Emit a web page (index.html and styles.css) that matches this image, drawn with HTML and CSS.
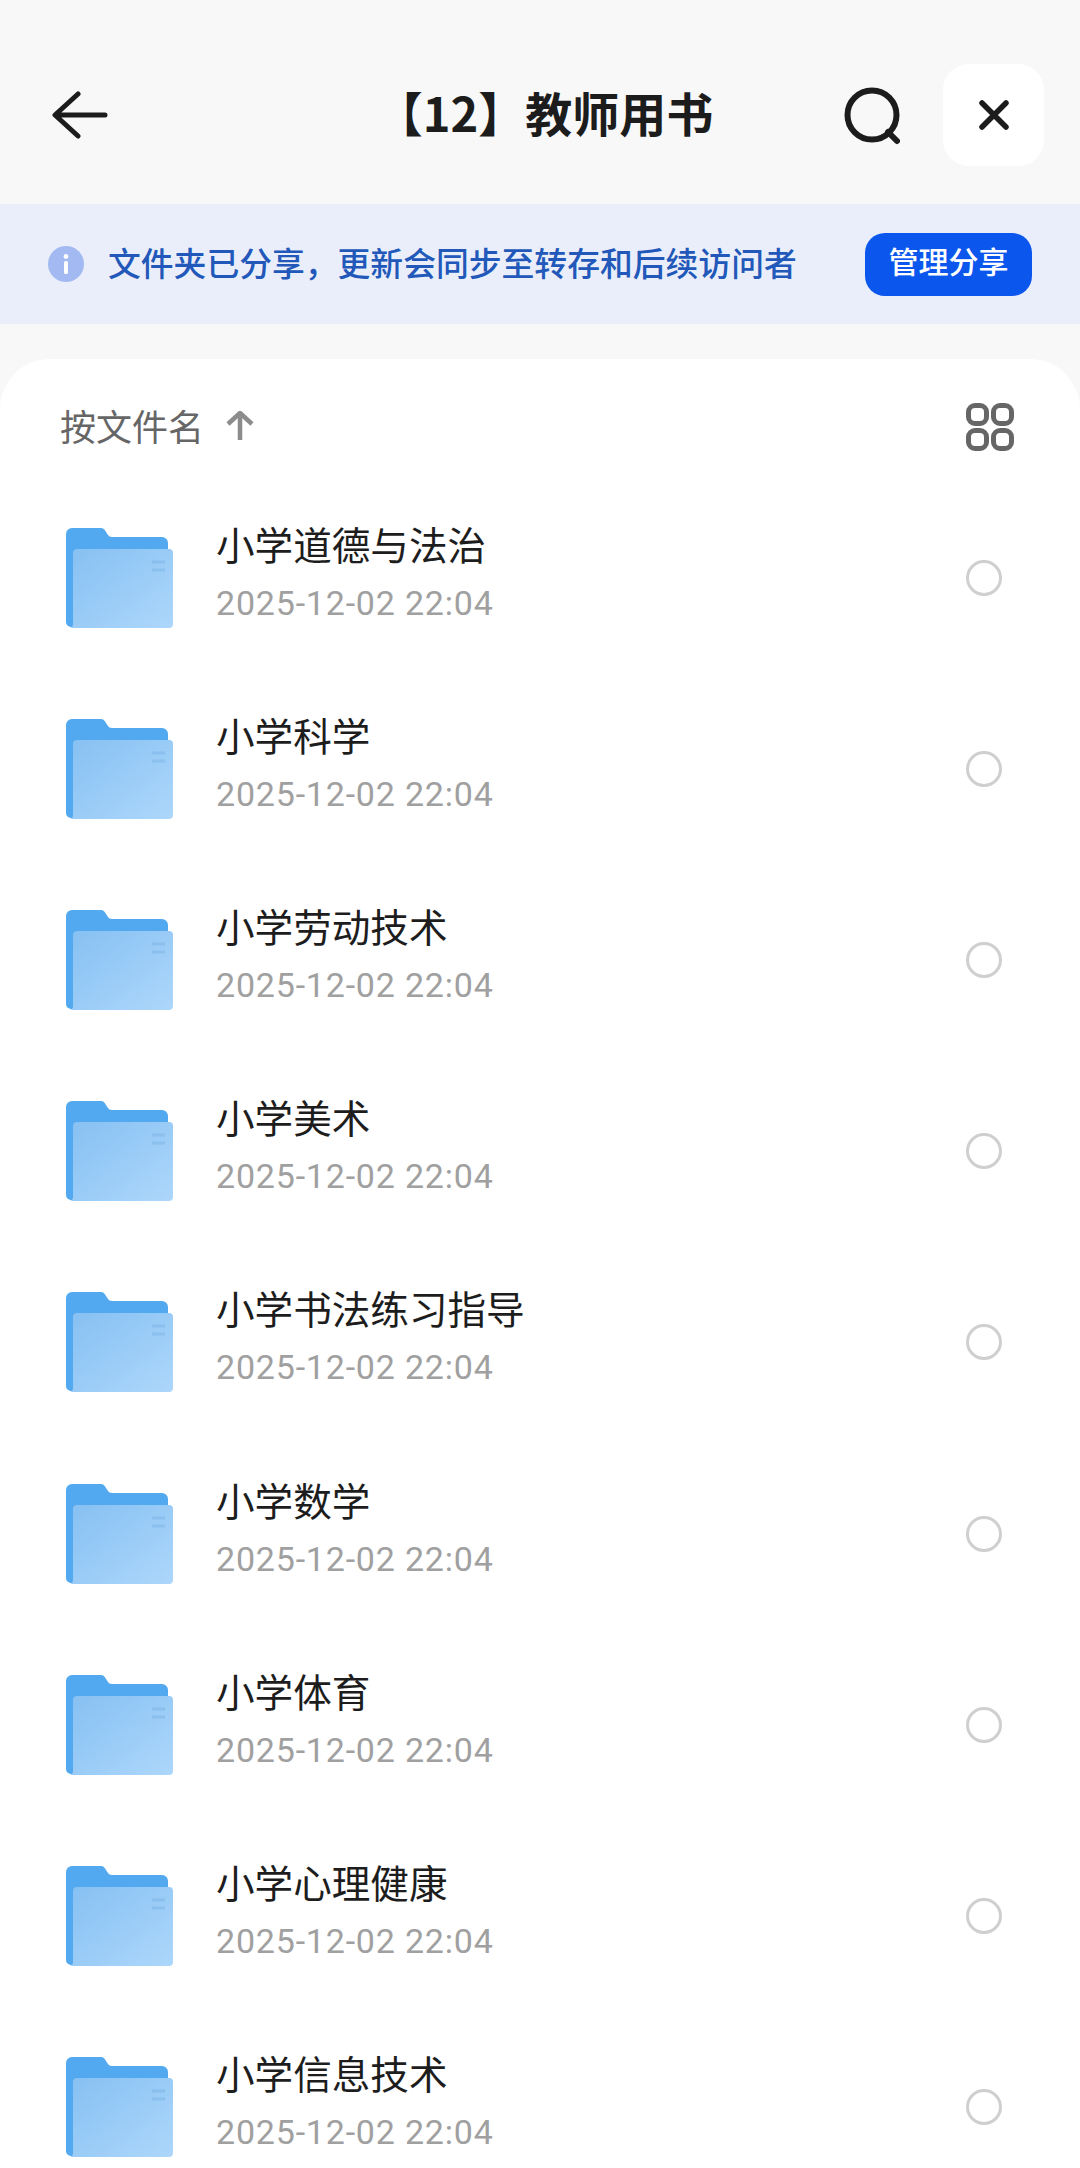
FILE: index.html
```html
<!DOCTYPE html>
<html lang="zh-CN">
	<head>
		<meta charset="utf-8">
		<title>【12】教师用书</title>
		<link rel="stylesheet" href="styles.css">
	</head>
	<body>
		<svg class="defs" width="0" height="0">
			<defs>
				<linearGradient id="folderFront" x1="0" y1="0" x2="1" y2="1">
					<stop offset="0" stop-color="#86c0f2"/>
					<stop offset="1" stop-color="#add7fb"/>
				</linearGradient>
				<symbol id="folder" viewBox="0 0 108 100">
					<path d="M0 6a6 6 0 0 1 6-6h29q3 0 5 4l2 3q1 2 4 2h50a6 6 0 0 1 6 6v10H8V99H5a5 5 0 0 1-5-5z" fill="#53a9f0"/>
					<path d="M7 25a4 4 0 0 1 4-4h92a4 4 0 0 1 4 4v71a4 4 0 0 1-4 4H4q3-1 3-4z" fill="url(#folderFront)"/>
					<path d="M86 34h13M86 42h13" stroke="#7fb6e6" stroke-width="3" opacity=".55"/>
				</symbol>
			</defs>
		</svg>

		<div class="topbar">
			<svg class="back" width="56" height="48" viewBox="0 0 56 48">
				<path d="M26 3 L3 24 L26 45 M4 24 H53" fill="none" stroke="#1c1c1c" stroke-width="5" stroke-linecap="round" stroke-linejoin="round"/>
			</svg>
			<div class="title">【12】教师用书</div>
			<svg class="search" width="56" height="58" viewBox="0 0 56 58">
				<circle cx="28" cy="28" r="24.5" fill="none" stroke="#1c1c1c" stroke-width="6"/>
				<path d="M44 45 L53 54" stroke="#1c1c1c" stroke-width="6" stroke-linecap="round"/>
			</svg>
			<div class="close">
				<svg width="32" height="32" viewBox="0 0 32 32">
					<path d="M4 4 L28 28 M28 4 L4 28" stroke="#1c1c1c" stroke-width="5.5" stroke-linecap="round"/>
				</svg>
			</div>
		</div>

		<div class="notice">
			<svg class="info" width="36" height="36" viewBox="0 0 36 36">
				<circle cx="18" cy="18" r="18" fill="#a3b9f2"/>
				<circle cx="18" cy="10.5" r="2.4" fill="#fff"/>
				<rect x="16" y="15" width="4" height="13" rx="1.5" fill="#fff"/>
			</svg>
			<div class="notice-text">文件夹已分享，更新会同步至转存和后续访问者</div>
			<div class="manage">管理分享</div>
		</div>

		<div class="panel">
			<div class="sortbar">
				<span class="sort-label">按文件名</span>
				<svg class="sort-arrow" width="30" height="30" viewBox="0 0 30 30">
					<path d="M3 13 L15 2 L27 13 M15 3 V29" fill="none" stroke="#8c8c8c" stroke-width="4.5" stroke-linejoin="round"/>
				</svg>
				<svg class="grid-icon" width="48" height="48" viewBox="0 0 48 48">
					<rect x="2.5" y="2.5" width="18" height="18" rx="6.5" fill="none" stroke="#666" stroke-width="5"/>
					<rect x="27.5" y="2.5" width="18" height="18" rx="6.5" fill="none" stroke="#666" stroke-width="5"/>
					<rect x="2.5" y="27.5" width="18" height="18" rx="6.5" fill="none" stroke="#666" stroke-width="5"/>
					<rect x="27.5" y="27.5" width="18" height="18" rx="6.5" fill="none" stroke="#666" stroke-width="5"/>
				</svg>
			</div>

			<div class="row">
				<svg class="folder"><use href="#folder"/></svg>
				<div class="info-col"><div class="name">小学道德与法治</div><div class="date">2025-12-02 22:04</div></div>
				<div class="radio"></div>
			</div>
			<div class="row">
				<svg class="folder"><use href="#folder"/></svg>
				<div class="info-col"><div class="name">小学科学</div><div class="date">2025-12-02 22:04</div></div>
				<div class="radio"></div>
			</div>
			<div class="row">
				<svg class="folder"><use href="#folder"/></svg>
				<div class="info-col"><div class="name">小学劳动技术</div><div class="date">2025-12-02 22:04</div></div>
				<div class="radio"></div>
			</div>
			<div class="row">
				<svg class="folder"><use href="#folder"/></svg>
				<div class="info-col"><div class="name">小学美术</div><div class="date">2025-12-02 22:04</div></div>
				<div class="radio"></div>
			</div>
			<div class="row">
				<svg class="folder"><use href="#folder"/></svg>
				<div class="info-col"><div class="name">小学书法练习指导</div><div class="date">2025-12-02 22:04</div></div>
				<div class="radio"></div>
			</div>
			<div class="row">
				<svg class="folder"><use href="#folder"/></svg>
				<div class="info-col"><div class="name">小学数学</div><div class="date">2025-12-02 22:04</div></div>
				<div class="radio"></div>
			</div>
			<div class="row">
				<svg class="folder"><use href="#folder"/></svg>
				<div class="info-col"><div class="name">小学体育</div><div class="date">2025-12-02 22:04</div></div>
				<div class="radio"></div>
			</div>
			<div class="row">
				<svg class="folder"><use href="#folder"/></svg>
				<div class="info-col"><div class="name">小学心理健康</div><div class="date">2025-12-02 22:04</div></div>
				<div class="radio"></div>
			</div>
			<div class="row">
				<svg class="folder"><use href="#folder"/></svg>
				<div class="info-col"><div class="name">小学信息技术</div><div class="date">2025-12-02 22:04</div></div>
				<div class="radio"></div>
			</div>
		</div>
	</body>
</html>
```

FILE: styles.css
```css
html, body {
	margin: 0;
	padding: 0;
}

body {
	width: 1080px;
	height: 2168px;
	overflow: hidden;
	background: #f8f8f8;
	font-family: "Noto Sans CJK SC", "Noto Sans", sans-serif;
}

.defs {
	display: block;
	height: 0;
}

/* top bar */
.topbar {
	height: 204px;
	display: flex;
	align-items: center;
	padding: 26px 36px 0 52px;
	box-sizing: border-box;
}

.back {
	flex: none;
}

.title {
	flex: 1;
	text-align: center;
	font-size: 47px;
	font-weight: 700;
	color: #1c1c1c;
	padding-left: 137px;
	margin-bottom: 8px;
	white-space: nowrap;
}

.search {
	flex: none;
	margin-right: 43px;
	margin-top: 1px;
}

.close {
	flex: none;
	width: 101px;
	height: 102px;
	background: #fff;
	border-radius: 26px;
	display: flex;
	align-items: center;
	justify-content: center;
}

/* share notice */
.notice {
	height: 120px;
	background: #eaeefa;
	display: flex;
	align-items: center;
	padding: 0 48px 0 48px;
	box-sizing: border-box;
}

.info {
	flex: none;
	margin-right: 24px;
}

.notice-text {
	flex: 1;
	font-size: 32.8px;
	font-weight: 500;
	color: #2158b9;
	white-space: nowrap;
	margin-bottom: 5px;
}

.manage {
	flex: none;
	width: 167px;
	height: 63px;
	line-height: 55px;
	text-align: center;
	background: #0b57ee;
	color: #fff;
	font-size: 30px;
	font-weight: 500;
	border-radius: 20px;
}

/* file list */
.panel {
	margin-top: 35px;
	background: #fff;
	border-radius: 50px 50px 0 0;
}

.sortbar {
	height: 123px;
	display: flex;
	align-items: center;
	padding: 8px 66px 0 60px;
	box-sizing: border-box;
}

.sort-label {
	font-size: 36px;
	color: #666;
	margin-right: 21px;
}

.sort-arrow {
	flex: none;
	margin-top: 3px;
}

.grid-icon {
	flex: none;
	margin-left: auto;
	margin-top: 5px;
}

.row {
	height: 191.2px;
	display: flex;
	align-items: center;
	padding: 0 78px 0 66px;
	box-sizing: border-box;
}

.folder {
	flex: none;
	width: 108px;
	height: 100px;
}

.info-col {
	flex: 1;
	margin-left: 42px;
	padding-bottom: 16px;
}

.name {
	font-size: 38.6px;
	line-height: 52px;
	color: #1d1d1d;
	white-space: nowrap;
}

.date {
	font-family: Roboto, "Noto Sans", sans-serif;
	font-size: 34px;
	letter-spacing: 0.8px;
	line-height: 40px;
	margin-top: 14px;
	color: #a0a0a0;
	white-space: nowrap;
}

.radio {
	flex: none;
	width: 36px;
	height: 36px;
	box-sizing: border-box;
	border: 3px solid #cfcfcf;
	border-radius: 50%;
}
```
